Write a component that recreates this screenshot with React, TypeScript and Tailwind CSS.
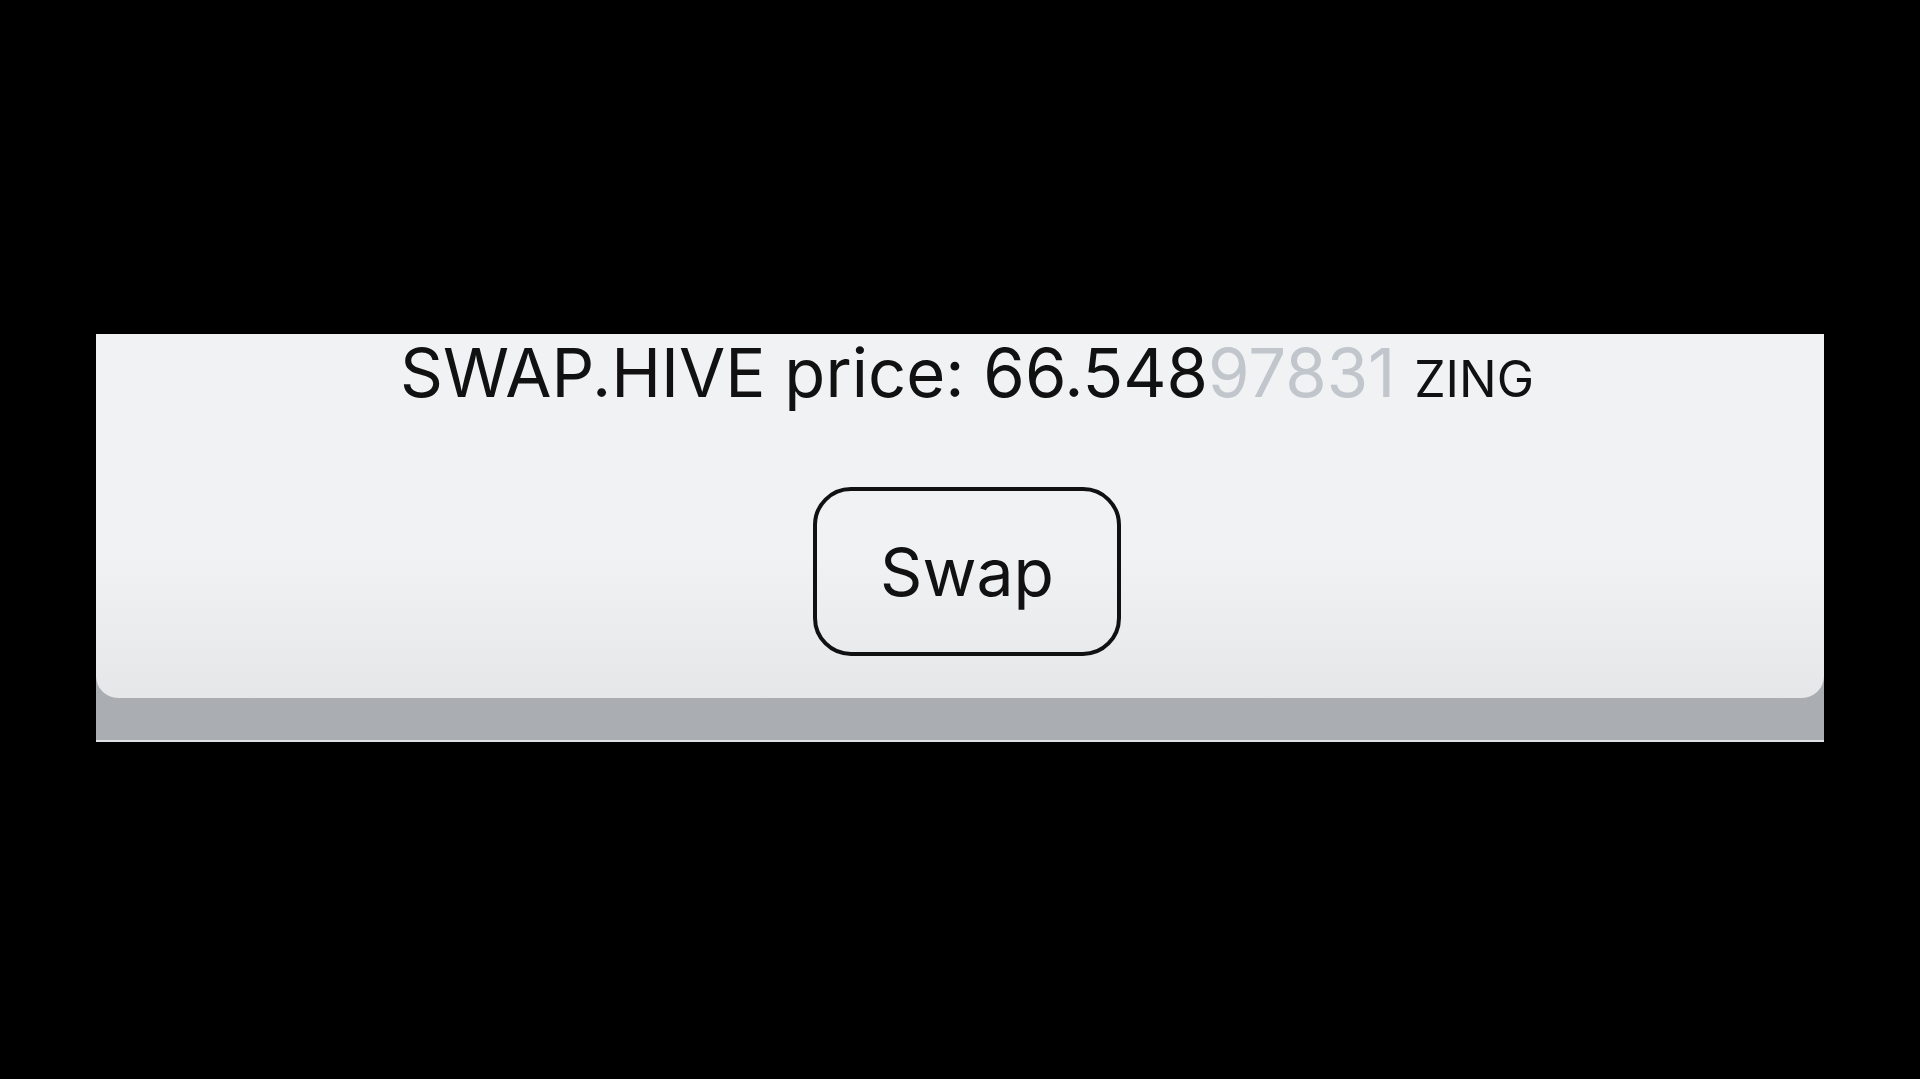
export default function App() {
  return (
    <div className="w-full h-[1079px] bg-black pt-[334px] px-[96px] overflow-hidden" style={{ fontFamily: "Inter, 'Noto Sans', sans-serif" }}>
      <div className="w-[1728px] h-[408px] bg-[#aaadb1] border-b-2 border-[#dfe1e4] overflow-hidden">
        <div className="h-[364px] rounded-b-[22px] bg-linear-to-b from-[#f1f2f4] from-60% to-[#e6e7e9] flex flex-col items-center pl-[14px]">
          <div className="mt-[5px] leading-none text-[67px] text-[#111111] whitespace-nowrap">
            SWAP.HIVE price: 66.548<span className="text-[#c1c6cd]">97831</span>{" "}
            <span className="text-[50px]">ZING</span>
          </div>
          <button className="mt-[81px] w-[308px] h-[169px] border-[4px] border-[#111111] rounded-[38px] text-[66px] leading-none text-[#111111] flex items-center justify-center">
            Swap
          </button>
        </div>
      </div>
    </div>
  );
}
